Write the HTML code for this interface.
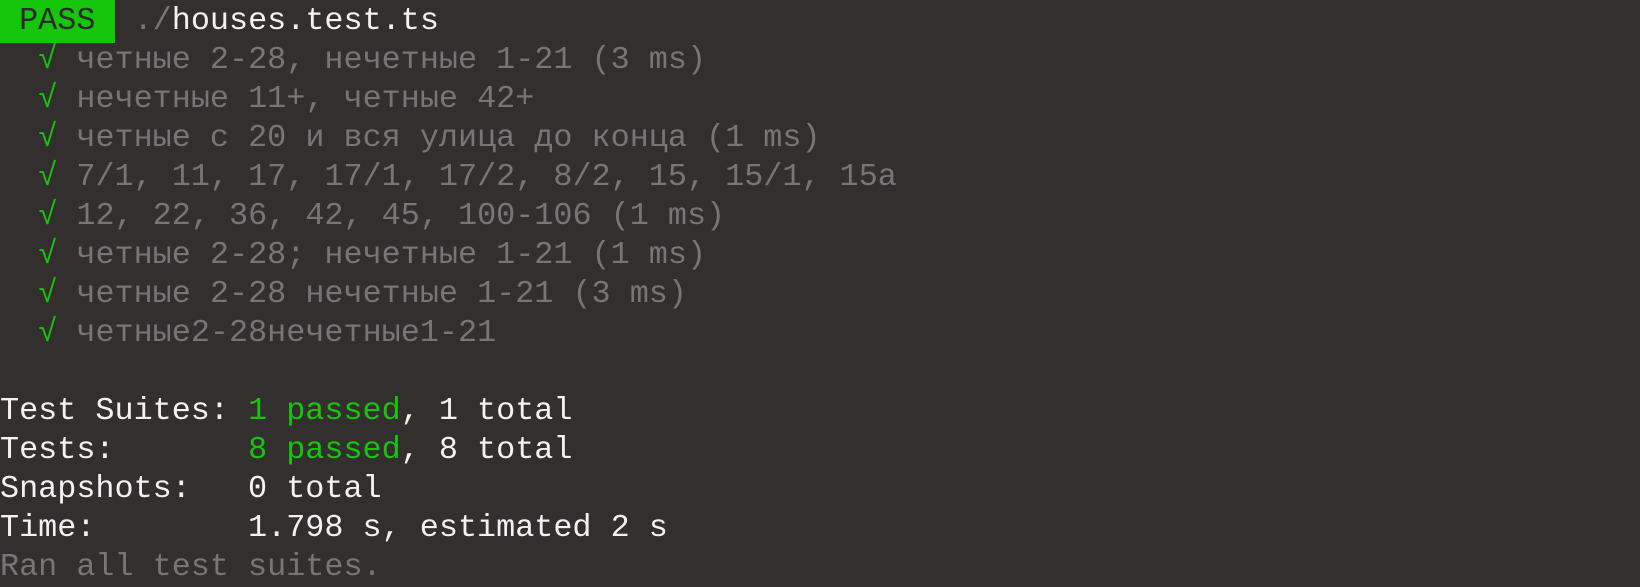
<!DOCTYPE html>
<html><head><meta charset="utf-8"><style>
html,body{margin:0;padding:0;background:#332f2f;width:1640px;height:587px;overflow:hidden}
pre{margin:0;padding:2px 0 0 0;font-family:"Liberation Mono","DejaVu Sans Mono",monospace;font-size:31.8px;line-height:39px;color:#f2f2f2;white-space:pre}
.b{background:#16c60c;color:#2b2b2b;padding:3px 0 4px 0}
.g{color:#16c60c}.d{color:#767676}
</style></head><body><pre><span class="b"> PASS </span> <span class="d">./</span>houses.test.ts
  <span class="g">√</span> <span class="d">четные 2-28, нечетные 1-21 (3 ms)</span>
  <span class="g">√</span> <span class="d">нечетные 11+, четные 42+</span>
  <span class="g">√</span> <span class="d">четные с 20 и вся улица до конца (1 ms)</span>
  <span class="g">√</span> <span class="d">7/1, 11, 17, 17/1, 17/2, 8/2, 15, 15/1, 15а</span>
  <span class="g">√</span> <span class="d">12, 22, 36, 42, 45, 100-106 (1 ms)</span>
  <span class="g">√</span> <span class="d">четные 2-28; нечетные 1-21 (1 ms)</span>
  <span class="g">√</span> <span class="d">четные 2-28 нечетные 1-21 (3 ms)</span>
  <span class="g">√</span> <span class="d">четные2-28нечетные1-21</span>

Test Suites: <span class="g">1 passed</span>, 1 total
Tests:       <span class="g">8 passed</span>, 8 total
Snapshots:   0 total
Time:        1.798 s, estimated 2 s
<span class="d">Ran all test suites.</span>
</pre></body></html>
